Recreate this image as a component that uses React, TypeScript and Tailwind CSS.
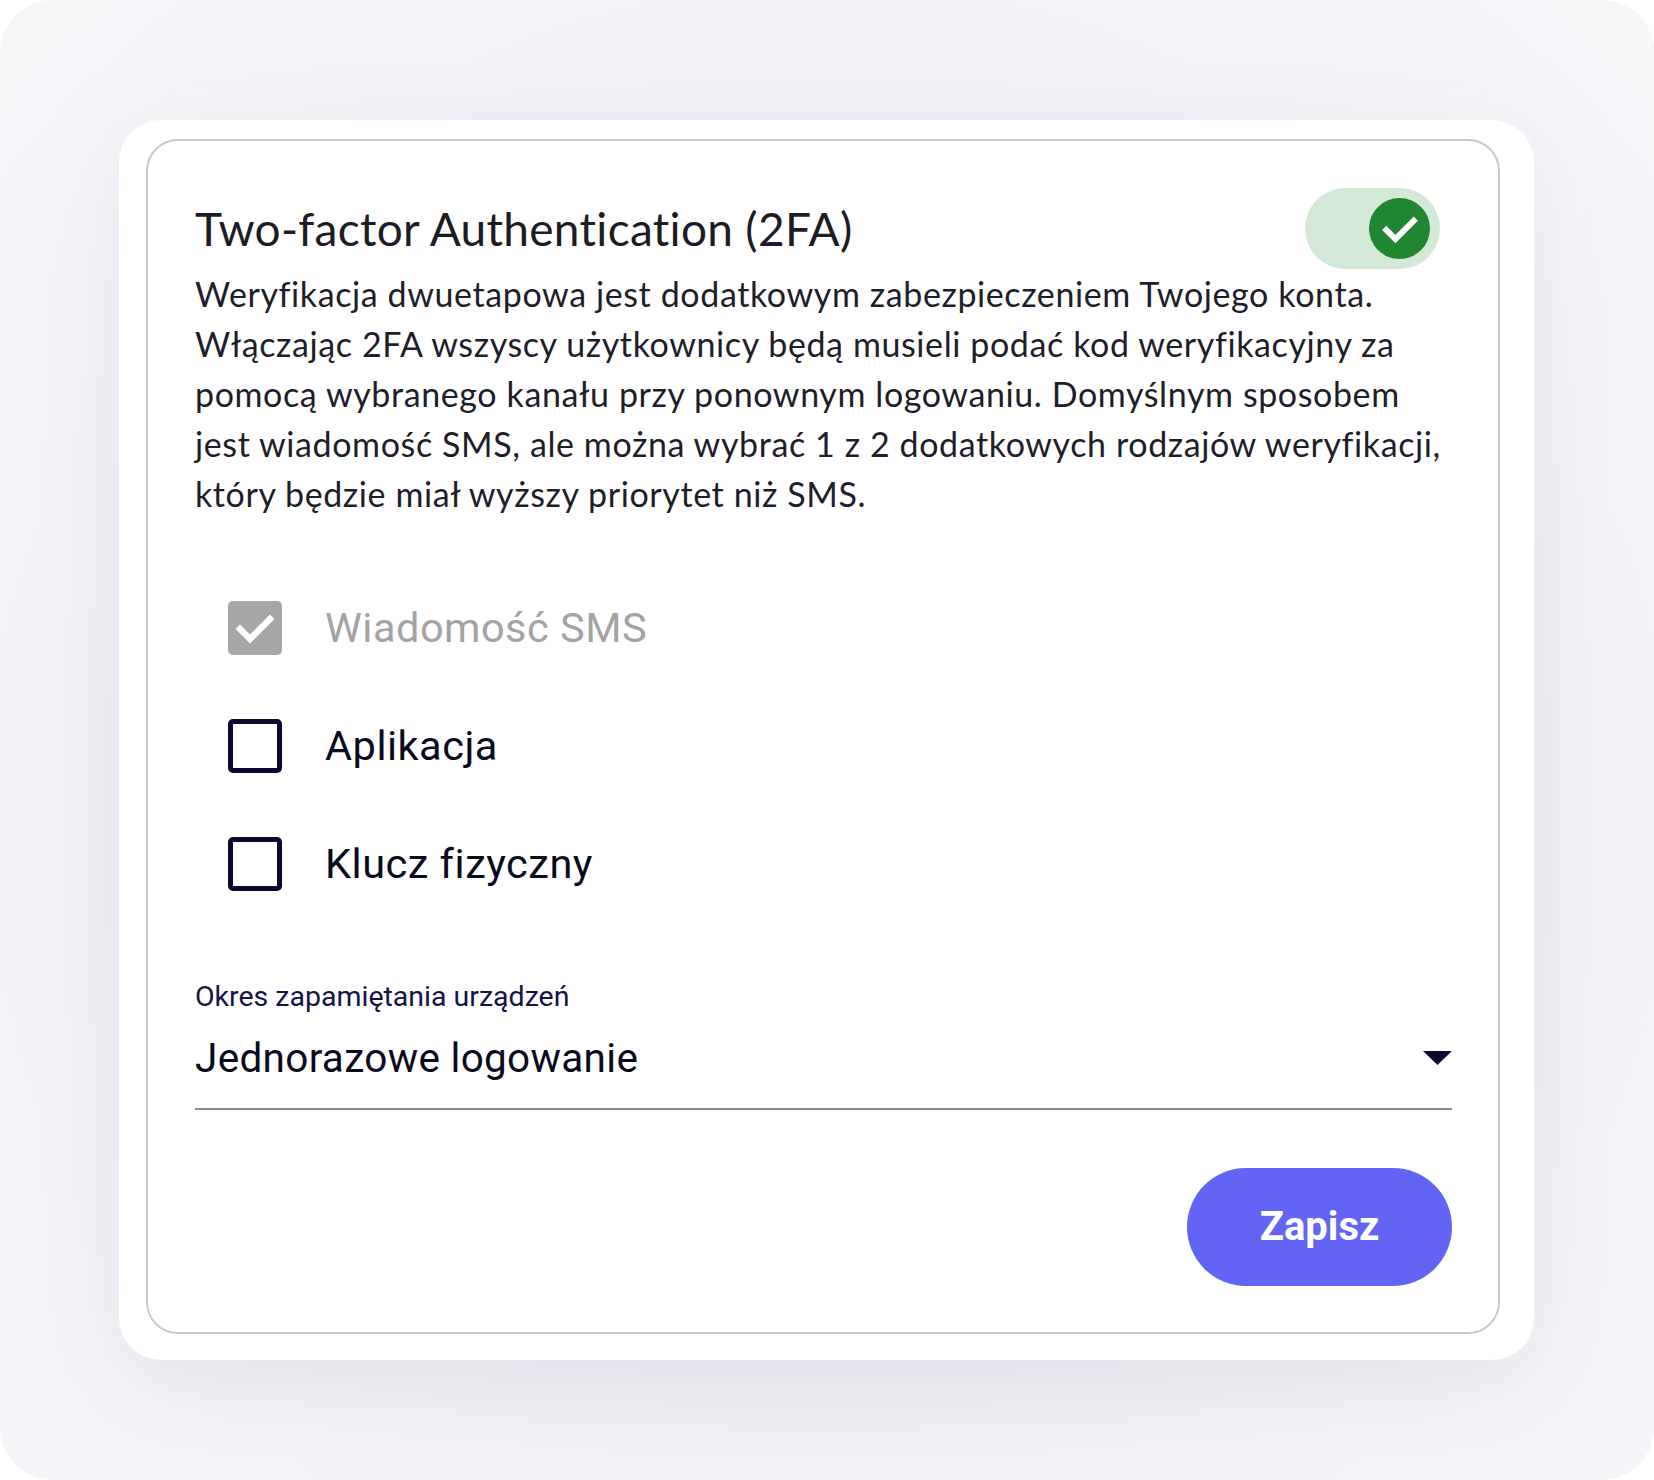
import React from "react";

const lato = { fontFamily: "Lato, 'Noto Sans', sans-serif" };
const roboto = { fontFamily: "Roboto, 'Noto Sans', sans-serif" };

function Check({ className }: { className?: string }) {
  return (
    <svg viewBox="0 0 24 24" className={className} fill="none">
      <path d="M4.5 12.5l5 5L19.5 7.5" stroke="white" strokeWidth="3.2" strokeLinecap="square" />
    </svg>
  );
}

function Row({ label, state }: { label: string; state: "disabled" | "off" }) {
  return (
    <div className="flex h-[118px] items-center pl-[33px]">
      {state === "disabled" ? (
        <div className="flex h-[54px] w-[54px] items-center justify-center rounded-[5px] bg-[#a6a6a6]">
          <Check className="h-[48px] w-[48px]" />
        </div>
      ) : (
        <div className="h-[54px] w-[54px] rounded-[5px] border-[5px] border-[#0b0930]" />
      )}
      <span
        style={roboto}
        className={
          "ml-[43px] text-[41.5px] leading-none tracking-[0.5px] " +
          (state === "disabled" ? "text-[#a3a3a3]" : "text-[#0a0a1e]")
        }
      >
        {label}
      </span>
    </div>
  );
}

export default function App() {
  return (
    <div className="h-[1480px] w-[1654px] bg-white">
      <div className="h-[1480px] w-[1654px] rounded-[52px] bg-[radial-gradient(ellipse_at_50%_55%,#e9e9f0_0%,#eeeef4_45%,#f7f7fa_100%)] pl-[119px] pt-[120px]">
        <div className="h-[1240px] w-[1415px] rounded-[42px] bg-white pl-[27px] pt-[19px] shadow-[0_20px_90px_rgba(70,70,120,0.08)]">
          <div className="flex h-[1195px] w-[1354px] flex-col rounded-[32px] border-2 border-[#cacac3] pl-[47px] pr-[46px] pt-[47px]">
            <div className="mr-[12px] flex h-[81px] items-center justify-between">
              <h1 style={lato} className="text-[46px] font-normal leading-none tracking-[0.3px] text-[#1c1c22]">
                Two-factor Authentication (2FA)
              </h1>
              <div className="flex h-[81px] w-[135px] items-center justify-end rounded-full bg-[#d3e8d7] pr-[10px]">
                <div className="flex h-[61px] w-[61px] items-center justify-center rounded-full bg-[#218632]">
                  <Check className="h-[44px] w-[44px]" />
                </div>
              </div>
            </div>
            <div style={lato} className="text-[34px] leading-[50px] tracking-[0.6px] text-[#1e1e2a]">
              <div className="whitespace-nowrap">Weryfikacja dwuetapowa jest dodatkowym zabezpieczeniem Twojego konta.</div>
              <div className="whitespace-nowrap">Włączając 2FA wszyscy użytkownicy będą musieli podać kod weryfikacyjny za</div>
              <div className="whitespace-nowrap">pomocą wybranego kanału przy ponownym logowaniu. Domyślnym sposobem</div>
              <div className="whitespace-nowrap">jest wiadomość SMS, ale można wybrać 1 z 2 dodatkowych rodzajów weryfikacji,</div>
              <div className="whitespace-nowrap">który będzie miał wyższy priorytet niż SMS.</div>
            </div>
            <div className="mt-[50px] flex flex-col">
              <Row label="Wiadomość SMS" state="disabled" />
              <Row label="Aplikacja" state="off" />
              <Row label="Klucz fizyczny" state="off" />
            </div>
            <div className="mt-[57px]" style={roboto}>
              <div className="text-[28.5px] leading-[34px] text-[#15124a]">Okres zapamiętania urządzeń</div>
              <div className="mt-[19px] box-content flex h-[50px] items-center justify-between border-b-2 border-[#8c8c8c] pb-[25px]">
                <span className="text-[40.5px] leading-[50px] tracking-[0.3px] text-[#0a0a1e]">Jednorazowe logowanie</span>
                <svg viewBox="0 0 29 14" className="h-[14px] w-[29px]">
                  <path d="M0 0h29L14.5 14z" fill="#0b0930" />
                </svg>
              </div>
            </div>
            <div className="mt-[58px] flex justify-end">
              <button
                style={roboto}
                className="flex h-[118px] w-[265px] items-center justify-center rounded-full bg-[#6264f5] text-[40px] font-bold text-white"
              >
                Zapisz
              </button>
            </div>
          </div>
        </div>
      </div>
    </div>
  );
}
